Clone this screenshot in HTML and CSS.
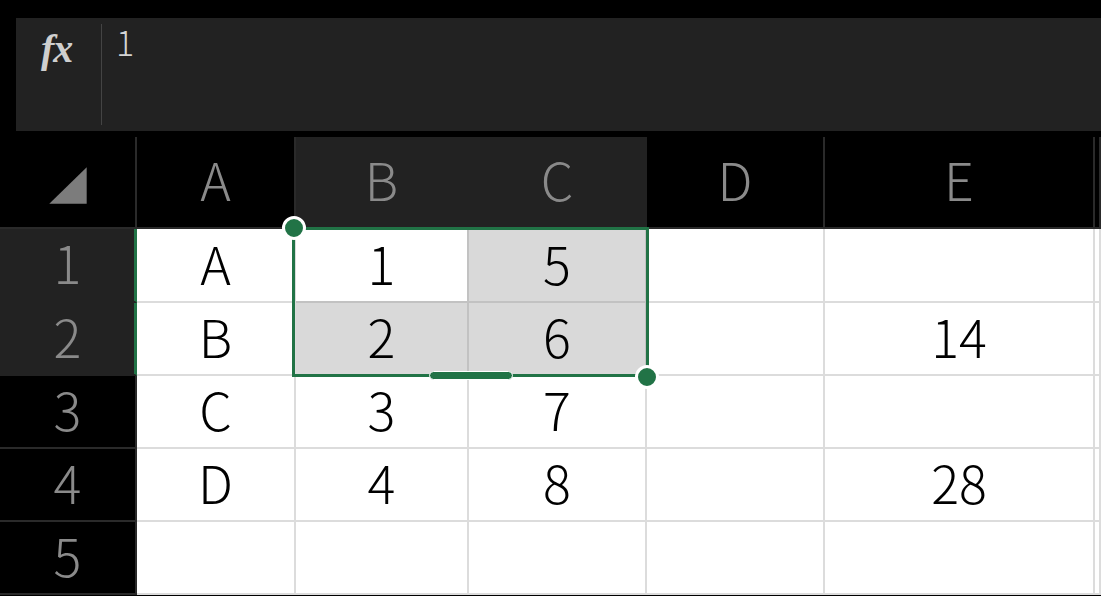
FILE: index.html
```html
<!DOCTYPE html>
<html lang="ja">
<head>
<meta charset="utf-8">
<title>Sheet</title>
<link rel="stylesheet" href="styles.css">
</head>
<body>
<div class="formula">
  <div class="fx">fx</div>
  <div class="fdiv"></div>
  <div class="ftext">1</div>
</div>
<div class="sheet">
  <div class="grid">
    <div class="corner"><svg width="137" height="92" viewBox="0 0 137 92"><polygon points="50,67 88,30 88,67" fill="#7c7c7c"/></svg></div>
    <div class="ch">A</div>
    <div class="ch hl">B</div>
    <div class="ch hl">C</div>
    <div class="ch">D</div>
    <div class="ch">E</div>
    <div class="ch"></div>

    <div class="rh hl">1</div>
    <div class="c">A</div>
    <div class="c act">1</div>
    <div class="c sel">5</div>
    <div class="c"></div>
    <div class="c"></div>
    <div class="c"></div>

    <div class="rh hl">2</div>
    <div class="c">B</div>
    <div class="c sel">2</div>
    <div class="c sel">6</div>
    <div class="c"></div>
    <div class="c">14</div>
    <div class="c"></div>

    <div class="rh">3</div>
    <div class="c">C</div>
    <div class="c">3</div>
    <div class="c">7</div>
    <div class="c"></div>
    <div class="c"></div>
    <div class="c"></div>

    <div class="rh">4</div>
    <div class="c">D</div>
    <div class="c">4</div>
    <div class="c">8</div>
    <div class="c"></div>
    <div class="c">28</div>
    <div class="c"></div>

    <div class="rh">5</div>
    <div class="c"></div>
    <div class="c"></div>
    <div class="c"></div>
    <div class="c"></div>
    <div class="c"></div>
    <div class="c"></div>
  </div>
  <div class="selection"></div>
  <div class="handle tl"></div>
  <div class="handle br"></div>
  <div class="pill"></div>
</div>
</body>
</html>
```
FILE: styles.css
```css
* { box-sizing: border-box; }
html, body {
  margin: 0;
  padding: 0;
  background: #000;
  overflow: hidden;
  height: 596px;
}
body {
  font-family: "Noto Sans CJK JP", "Noto Sans", sans-serif;
}
.formula {
  margin: 18px 0 0 16px;
  height: 113px;
  background: #222222;
  display: flex;
  align-items: flex-start;
}
.fx {
  width: 85px;
  padding: 11px 0 0 25px;
  font-family: "Liberation Serif", "DejaVu Serif", serif;
  font-style: italic;
  font-weight: bold;
  font-size: 40px;
  line-height: 1;
  color: #cfcfcf;
  letter-spacing: -1px;
}
.fdiv {
  width: 1px;
  height: 101px;
  margin-top: 6px;
  background: #444;
}
.ftext {
  padding: 0 0 0 14px;
  font-size: 34px;
  font-weight: 300;
  line-height: 1.4;
  color: #d4d4d4;
}
.sheet {
  position: relative;
  margin-top: 6px;
}
.grid {
  display: grid;
  grid-template-columns: 137px 159px 173px 178px 178px 270px 1fr;
  grid-template-rows: 92px 74px 73px 73px 73px 73px;
}
.corner, .ch, .rh {
  background: #000;
  border-right: 2px solid #2a2a2a;
  border-bottom: 2px solid #2a2a2a;
  color: #8a8a8a;
  font-size: 52px;
  font-weight: 300;
  display: flex;
  align-items: center;
  justify-content: center;
  line-height: 1;
  padding-bottom: 6px;
}
.corner svg { display: block; }
.corner { justify-content: flex-start; align-items: flex-start; padding-bottom: 0; }
.ch.hl { background: #222222; border-right-color: #222222; }
.rh.hl {
  background: #222222;
  border-right-color: #217346;
  box-shadow: inset -1px 0 0 #217346;
  border-bottom-color: #222222;
}
.c {
  background: #fff;
  border-right: 2px solid #dcdcdc;
  border-bottom: 2px solid #dcdcdc;
  color: #000;
  font-size: 52px;
  font-weight: 300;
  display: flex;
  align-items: center;
  justify-content: center;
  line-height: 1;
  padding-bottom: 5px;
}
.c.sel { background: #d9d9d9; border-color: #c2c2c2; }
.c.act { border-color: #c2c2c2; }
.selection {
  position: absolute;
  left: 292px;
  top: 90px;
  width: 357px;
  height: 150px;
  border: 3px solid #217346;
}
.handle {
  position: absolute;
  width: 24px;
  height: 24px;
  border-radius: 50%;
  background: #217346;
  border: 3px solid #fff;
}
.handle.tl { left: 282px; top: 79px; }
.handle.br { left: 635px; top: 228px; }
.pill {
  position: absolute;
  left: 429px;
  top: 234px;
  width: 84px;
  height: 9px;
  border-radius: 5px;
  background: #217346;
  border: 1.5px solid #fff;
}
```
